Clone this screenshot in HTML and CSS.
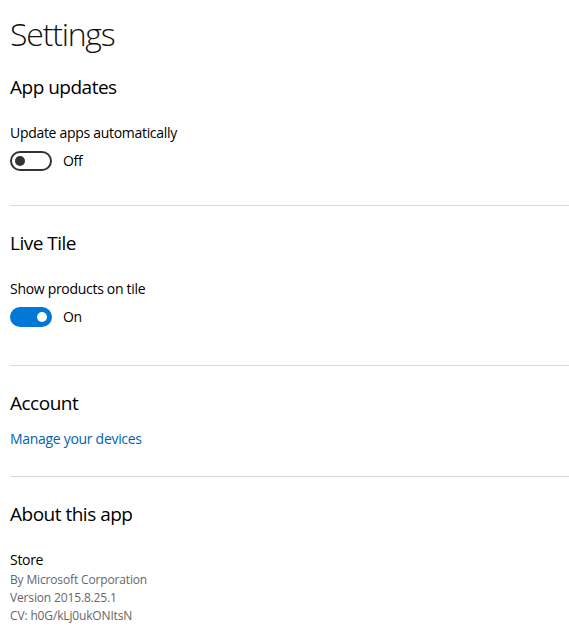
FILE: index.html
```html
<!DOCTYPE html>
<html lang="en">
<head>
  <meta charset="UTF-8">
  <meta name="viewport" content="width=device-width, initial-scale=1.0">
  <title>Settings</title>
  <link rel="stylesheet" href="styles.css">
</head>
<body>
  <div class="page">
    <h1>Settings</h1>

    <section class="group">
      <h2>App updates</h2>
      <div class="setting">
        <div class="label">Update apps automatically</div>
        <label class="toggle">
          <span class="switch"><span class="knob"></span></span>
          <span class="state">Off</span>
        </label>
      </div>
    </section>

    <section class="group tile">
      <h2>Live Tile</h2>
      <div class="setting">
        <div class="label">Show products on tile</div>
        <label class="toggle on">
          <span class="switch"><span class="knob"></span></span>
          <span class="state">On</span>
        </label>
      </div>
    </section>

    <section class="group account">
      <h2>Account</h2>
      <a class="link" href="#">Manage your devices</a>
    </section>

    <section class="group last">
      <h2>About this app</h2>
      <div class="about">
        <div class="app-name">Store</div>
        <div class="meta">By Microsoft Corporation</div>
        <div class="meta">Version 2015.8.25.1</div>
        <div class="meta">CV: h0G/kLj0ukONItsN</div>
      </div>
    </section>
  </div>
</body>
</html>
```

FILE: styles.css
```css
* {
  margin: 0;
  padding: 0;
  box-sizing: border-box;
}

body {
  background: #fff;
  color: #000;
  font-family: 'Open Sans', 'Noto Sans', sans-serif;
}

.page {
  padding: 14px 0 0 10px;
}

h1 {
  font-size: 32px;
  font-weight: 300;
  line-height: 40px;
  letter-spacing: -1.2px;
  color: #111;
}

h2 {
  font-size: 19px;
  font-weight: 400;
  line-height: 26px;
  letter-spacing: -0.5px;
}

.group {
  padding: 24px 0 34px;
  border-bottom: 1px solid #d9d9d9;
}

.group:first-of-type {
  padding-top: 20px;
}

.group.tile {
  padding-bottom: 38px;
}

.group.account {
  padding-bottom: 27px;
}

.group.last {
  border-bottom: none;
}

.setting {
  margin-top: 23px;
}

.label {
  font-size: 14px;
  line-height: 20px;
  letter-spacing: -0.3px;
}

.toggle {
  display: flex;
  align-items: center;
  gap: 11px;
  margin-top: 8px;
}

.switch {
  display: flex;
  align-items: center;
  width: 42px;
  height: 20px;
  padding: 0 3px;
  border: 2px solid #333;
  border-radius: 10px;
}

.knob {
  width: 10px;
  height: 10px;
  border-radius: 50%;
  background: #333;
}

.toggle.on .switch {
  justify-content: flex-end;
  background: #0078d7;
  border-color: #0078d7;
}

.toggle.on .knob {
  background: #fff;
}

.state {
  font-size: 14px;
  line-height: 20px;
  letter-spacing: -0.3px;
}

.link {
  display: block;
  margin-top: 13px;
  font-size: 14px;
  line-height: 20px;
  letter-spacing: -0.3px;
  color: #0063b1;
  text-decoration: none;
}

.about {
  margin-top: 22px;
}

.app-name {
  font-size: 14px;
  line-height: 22px;
  letter-spacing: -0.3px;
}

.meta {
  font-size: 12px;
  line-height: 18px;
  letter-spacing: -0.15px;
  color: #666;
}
```
